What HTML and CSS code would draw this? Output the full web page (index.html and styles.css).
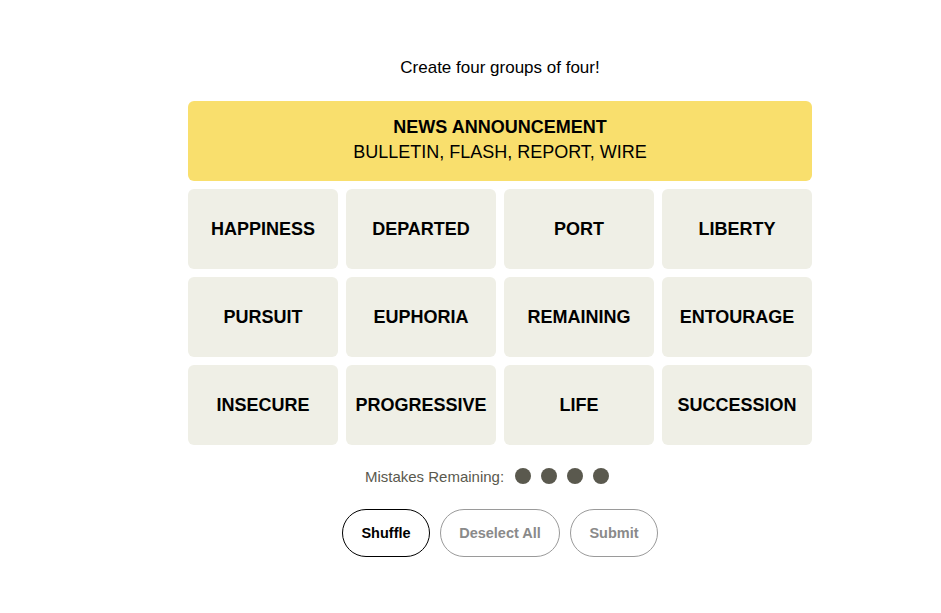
FILE: index.html
```html
<!DOCTYPE html>
<html lang="en">
<head>
<meta charset="utf-8">
<title>Connections</title>
<link rel="stylesheet" href="styles.css">
</head>
<body>
<main class="game">
  <p class="prompt">Create four groups of four!</p>
  <section class="board">
    <div class="solved">
      <h3 class="solved-title">NEWS ANNOUNCEMENT</h3>
      <p class="solved-words">BULLETIN, FLASH, REPORT, WIRE</p>
    </div>
    <div class="tile">HAPPINESS</div>
    <div class="tile">DEPARTED</div>
    <div class="tile">PORT</div>
    <div class="tile">LIBERTY</div>
    <div class="tile">PURSUIT</div>
    <div class="tile">EUPHORIA</div>
    <div class="tile">REMAINING</div>
    <div class="tile">ENTOURAGE</div>
    <div class="tile">INSECURE</div>
    <div class="tile">PROGRESSIVE</div>
    <div class="tile">LIFE</div>
    <div class="tile">SUCCESSION</div>
  </section>
  <div class="mistakes">
    <span class="mistakes-label">Mistakes Remaining:</span>
    <span class="dots">
      <span class="dot"></span><span class="dot"></span><span class="dot"></span><span class="dot"></span>
    </span>
  </div>
  <div class="actions">
    <button class="btn btn-active btn-shuffle">Shuffle</button>
    <button class="btn btn-disabled btn-deselect">Deselect All</button>
    <button class="btn btn-disabled btn-submit">Submit</button>
  </div>
</main>
</body>
</html>
```

FILE: styles.css
```css
html, body {
  margin: 0;
  padding: 0;
  background: #ffffff;
}

body {
  font-family: "Liberation Sans", Arial, sans-serif;
  color: #000000;
}

.game {
  width: 624px;
  margin-left: 188px;
  padding-top: 56px;
  display: flex;
  flex-direction: column;
  align-items: center;
}

.prompt {
  margin: 0;
  font-size: 17px;
  line-height: 24px;
  text-align: center;
}

.board {
  margin-top: 21px;
  width: 624px;
  display: grid;
  grid-template-columns: repeat(4, 150px);
  grid-auto-rows: 80px;
  gap: 8px;
}

.solved {
  grid-column: 1 / -1;
  background: #f9df6d;
  border-radius: 6px;
  display: flex;
  flex-direction: column;
  align-items: center;
  justify-content: center;
  padding-bottom: 2px;
}

.solved-title {
  margin: 0;
  font-size: 18px;
  font-weight: 700;
  line-height: 25px;
}

.solved-words {
  margin: 0;
  font-size: 18px;
  line-height: 25px;
}

.tile {
  background: #efefe6;
  border-radius: 6px;
  display: flex;
  align-items: center;
  justify-content: center;
  font-size: 18px;
  font-weight: 700;
  padding-top: 1px;
}

.mistakes {
  margin-top: 21px;
  height: 20px;
  display: flex;
  align-items: center;
  gap: 11px;
  padding-right: 26px;
}

.mistakes-label {
  font-size: 15px;
  color: #5a594e;
}

.dots {
  display: flex;
  gap: 10px;
}

.dot {
  width: 16px;
  height: 16px;
  border-radius: 50%;
  background: #5a594e;
}

.actions {
  margin-top: 23px;
  display: flex;
  gap: 10px;
}

.btn {
  height: 48px;
  border-radius: 24px;
  background: #ffffff;
  font-family: "Liberation Sans", Arial, sans-serif;
  font-size: 14.5px;
  font-weight: 700;
  padding: 0;
  cursor: pointer;
}

.btn-active {
  border: 1px solid #000000;
  color: #000000;
}

.btn-disabled {
  border: 1px solid #9a9a9a;
  color: #8a8a8a;
}

.btn-shuffle { width: 88px; }
.btn-deselect { width: 120px; }
.btn-submit { width: 88px; }
```
